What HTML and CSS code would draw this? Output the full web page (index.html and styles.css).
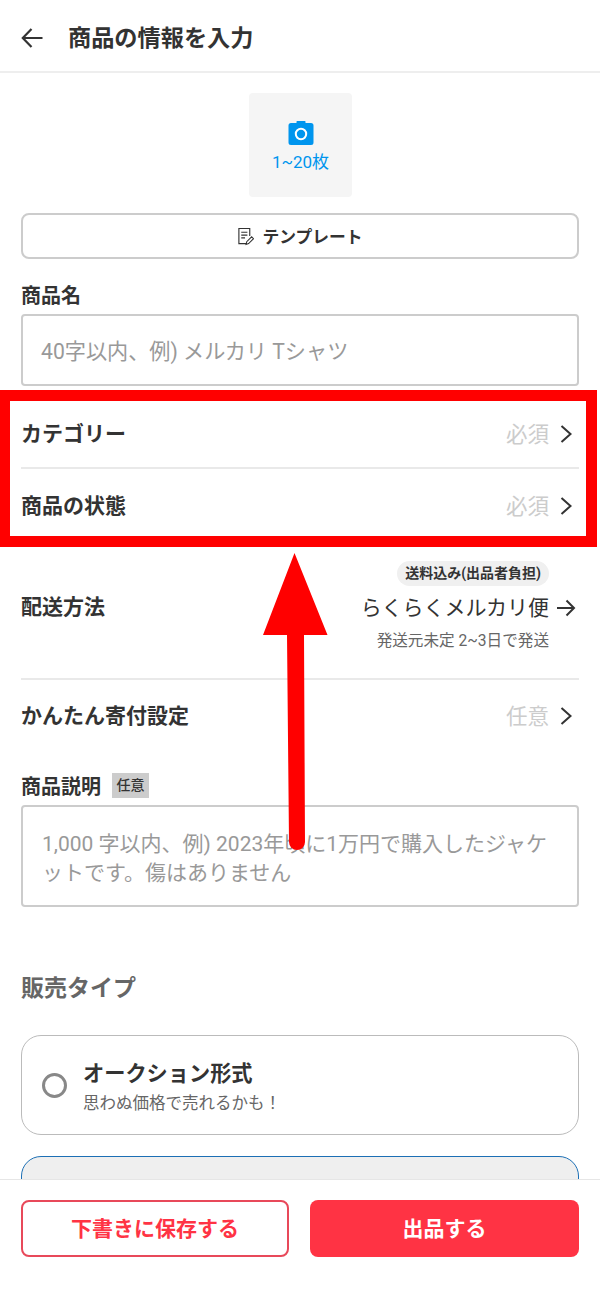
FILE: index.html
```html
<!DOCTYPE html>
<html lang="ja">
<head>
<meta charset="utf-8">
<title>商品の情報を入力</title>
<link rel="stylesheet" href="styles.css">
</head>
<body>
<div class="app">
  <header class="topbar">
    <svg class="back" viewBox="0 0 24 24" width="24" height="24"><path d="M22.500 12H3M11.500 3 2.800 12l8.700 9" fill="none" stroke="#333" stroke-width="2.200"/></svg>
    <h1 class="title">商品の情報を入力</h1>
  </header>
  <main class="content">
    <div class="photo-wrap">
      <div class="photo">
        <svg viewBox="0 0 26 26" width="26" height="26"><path d="M8.500 1.500 9 1h8l.5.500V3H23a2.500 2.500 0 0 1 2.500 2.500v17A2.500 2.500 0 0 1 23 25H3a2.500 2.500 0 0 1-2.500-2.500v-17A2.500 2.500 0 0 1 3 3h5.500z" fill="#0095ee"/><circle cx="13" cy="14" r="5.200" fill="none" stroke="#fff" stroke-width="2"/></svg>
        <span class="photo-text">1~20枚</span>
      </div>
    </div>
    <button class="template">
      <svg viewBox="0 0 18 20" width="17" height="19"><path d="M10 17.500H2V1.500h11.500v8M4.500 5.500H11M4.500 8.500H11M4.500 11.500H8.500" fill="none" stroke="#333" stroke-width="1.200"/><path d="M9.500 18.500l.8-3 5.200-5.200 2 2-5.200 5.200z" fill="none" stroke="#333" stroke-width="1.100"/></svg>
      <span class="template-text">テンプレート</span>
    </button>
    <label class="label label-name">商品名</label>
    <div class="input">40字以内、例) メルカリ Tシャツ</div>
    <div class="row row-cat">
      <span class="row-label">カテゴリー</span>
      <span class="row-value">必須</span>
      <svg class="chev" viewBox="0 0 12 18" width="12" height="18"><path d="M1.500 1 10.500 9l-9 8" fill="none" stroke="#333" stroke-width="2"/></svg>
    </div>
    <div class="row row-state">
      <span class="row-label">商品の状態</span>
      <span class="row-value">必須</span>
      <svg class="chev" viewBox="0 0 12 18" width="12" height="18"><path d="M1.500 1 10.500 9l-9 8" fill="none" stroke="#333" stroke-width="2"/></svg>
    </div>
    <div class="ship">
      <span class="row-label ship-label">配送方法</span>
      <div class="ship-right">
        <span class="pill">送料込み(出品者負担)</span>
        <div class="ship-method">
          <span>らくらくメルカリ便</span>
          <svg viewBox="0 0 20 18" width="20" height="18"><path d="M1 9h17M10.500 1.500 18 9l-7.500 7.500" fill="none" stroke="#333" stroke-width="2"/></svg>
        </div>
        <span class="ship-note">発送元未定 2~3日で発送</span>
      </div>
    </div>
    <div class="row row-donate">
      <span class="row-label">かんたん寄付設定</span>
      <span class="row-value">任意</span>
      <svg class="chev" viewBox="0 0 12 18" width="12" height="18"><path d="M1.500 1 10.500 9l-9 8" fill="none" stroke="#333" stroke-width="2"/></svg>
    </div>
    <div class="desc-head">
      <span class="label label-desc">商品説明</span>
      <span class="tag">任意</span>
    </div>
    <div class="textarea">1,000 字以内、例) 2023年頃に1万円で購入したジャケットです。傷はありません</div>
    <h2 class="section">販売タイプ</h2>
    <div class="card">
      <span class="radio"></span>
      <div class="card-body">
        <div class="card-title">オークション形式</div>
        <div class="card-sub">思わぬ価格で売れるかも！</div>
      </div>
    </div>
    <div class="card-selected"></div>
  </main>
  <footer class="footer">
    <button class="btn btn-outline">下書きに保存する</button>
    <button class="btn btn-solid">出品する</button>
  </footer>
  <div class="mark-frame"></div>
  <svg class="mark-arrow" viewBox="0 0 65 300" width="65" height="300"><path d="M31.500 0 64.500 82H41L42 289a8 8 0 0 1-16 0L24 82H0z" fill="#f00"/></svg>
</div>
</body>
</html>
```
FILE: styles.css
```css
* { box-sizing: border-box; }
html, body { margin: 0; padding: 0; background: #fff; }
body { font-family: Roboto, "Noto Sans CJK JP", sans-serif; color: #333; }
.app { position: relative; width: 600px; height: 1292px; display: flex; flex-direction: column; overflow: hidden; }
.topbar { height: 73px; flex: none; display: flex; align-items: center; padding: 4px 0 0 20px; border-bottom: 2px solid #eee; }
.title { margin: 0 0 0 24px; font-size: 23.200px; font-weight: 700; line-height: 32px; color: #333; }
.content { flex: 1; min-height: 0; overflow: hidden; padding: 20px 21px 0; }
.photo-wrap { display: flex; justify-content: center; }
.photo { width: 103px; height: 104px; background: #f5f5f5; border-radius: 4px; display: flex; flex-direction: column; align-items: center; padding-top: 27px; margin-left: 1px; }
.photo-text { font-size: 17px; line-height: 22px; color: #0095ee; margin-top: 5px; }
.template { width: 558px; height: 46px; margin-top: 16px; background: #fff; border: 2px solid #ccc; border-radius: 8px; display: flex; align-items: center; justify-content: center; gap: 8px; font: 700 16.800px/22px Roboto, "Noto Sans CJK JP", sans-serif; color: #333; padding: 0; }
.template-text { padding-top: 2px; }
.label { display: block; font-size: 20px; font-weight: 700; line-height: 24px; color: #333; }
.label-name { margin-top: 25px; }
.label-desc { padding-top: 3px; }
.input { height: 72px; margin-top: 6px; border: 2px solid #ccc; border-radius: 4px; padding: 0 18px 2px; display: flex; align-items: center; font-size: 21.150px; color: #999; }
.row { display: flex; align-items: center; border-bottom: 2px solid #e9e9e9; }
.row-cat { height: 83px; padding-top: 15px; }
.row-state { height: 74px; border-bottom: 0; }
.row-donate { height: 74px; border-bottom: 0; padding-bottom: 2px; }
.row-label { font-size: 21px; font-weight: 700; color: #333; line-height: 28px; }
.row-value { margin-left: auto; font-size: 21.500px; color: #ccc; padding-bottom: 4px; }
.chev { margin-left: 11px; margin-right: 7px; }
.ship { display: flex; justify-content: space-between; height: 137px; border-bottom: 2px solid #e9e9e9; }
.ship-label { margin-top: 50px; }
.ship-right { display: flex; flex-direction: column; align-items: flex-end; padding-top: 18px; padding-right: 30px; }
.pill { background: #f0f0f0; border-radius: 13px; font-size: 14px; font-weight: 700; line-height: 25px; padding: 0 8px; color: #333; }
.ship-method { display: flex; align-items: center; font-size: 21px; line-height: 32px; margin-top: 6px; margin-right: -30px; gap: 7px; padding-right: 3px; }
.ship-note { font-size: 15.600px; color: #666; line-height: 20px; margin-top: 7px; }
.desc-head { display: flex; align-items: center; gap: 11px; margin-top: 18px; height: 26px; }
.tag { background: #ccc; font-size: 14px; line-height: 25px; padding: 0 4.500px; color: #333; font-weight: 500; }
.textarea { height: 102px; margin-top: 7px; border: 2px solid #ccc; border-radius: 4px; padding: 23px 19px 0; font-size: 21px; line-height: 29px; color: #999; }
.section { margin: 66px 0 0; font-size: 23px; font-weight: 700; line-height: 32px; color: #666; }
.card { height: 100px; margin-top: 30px; border: 1px solid #bbb; border-radius: 20px; display: flex; align-items: center; padding-left: 20px; gap: 16px; }
.radio { width: 25px; height: 25px; border: 3px solid #888; border-radius: 50%; flex: none; }
.card-body { padding-top: 5px; }
.card-title { font-size: 21.200px; font-weight: 700; line-height: 28px; color: #333; }
.card-sub { font-size: 16.500px; line-height: 24px; color: #666; margin-top: 4px; }
.card-selected { height: 100px; margin-top: 21px; border: 1px solid #1c6fb5; border-radius: 20px; background: #efefef; }
.footer { flex: none; height: 113px; border-top: 1px solid #e6e6e6; background: #fff; display: flex; gap: 21px; padding: 20px 0 0 21px; }
.btn { flex: none; height: 57px; border-radius: 8px; font: 700 21px/28px Roboto, "Noto Sans CJK JP", sans-serif; padding: 0; }
.btn-outline { width: 268px; background: #fff; color: #ff3344; border: 2px solid #e8495a; }
.btn-solid { width: 269px; background: #ff3344; color: #fff; border: 0; }
.mark-frame { position: absolute; left: -1px; top: 390px; width: 598px; height: 157px; border: 11px solid #f00; }
.mark-arrow { position: absolute; left: 263px; top: 553px; }
```
